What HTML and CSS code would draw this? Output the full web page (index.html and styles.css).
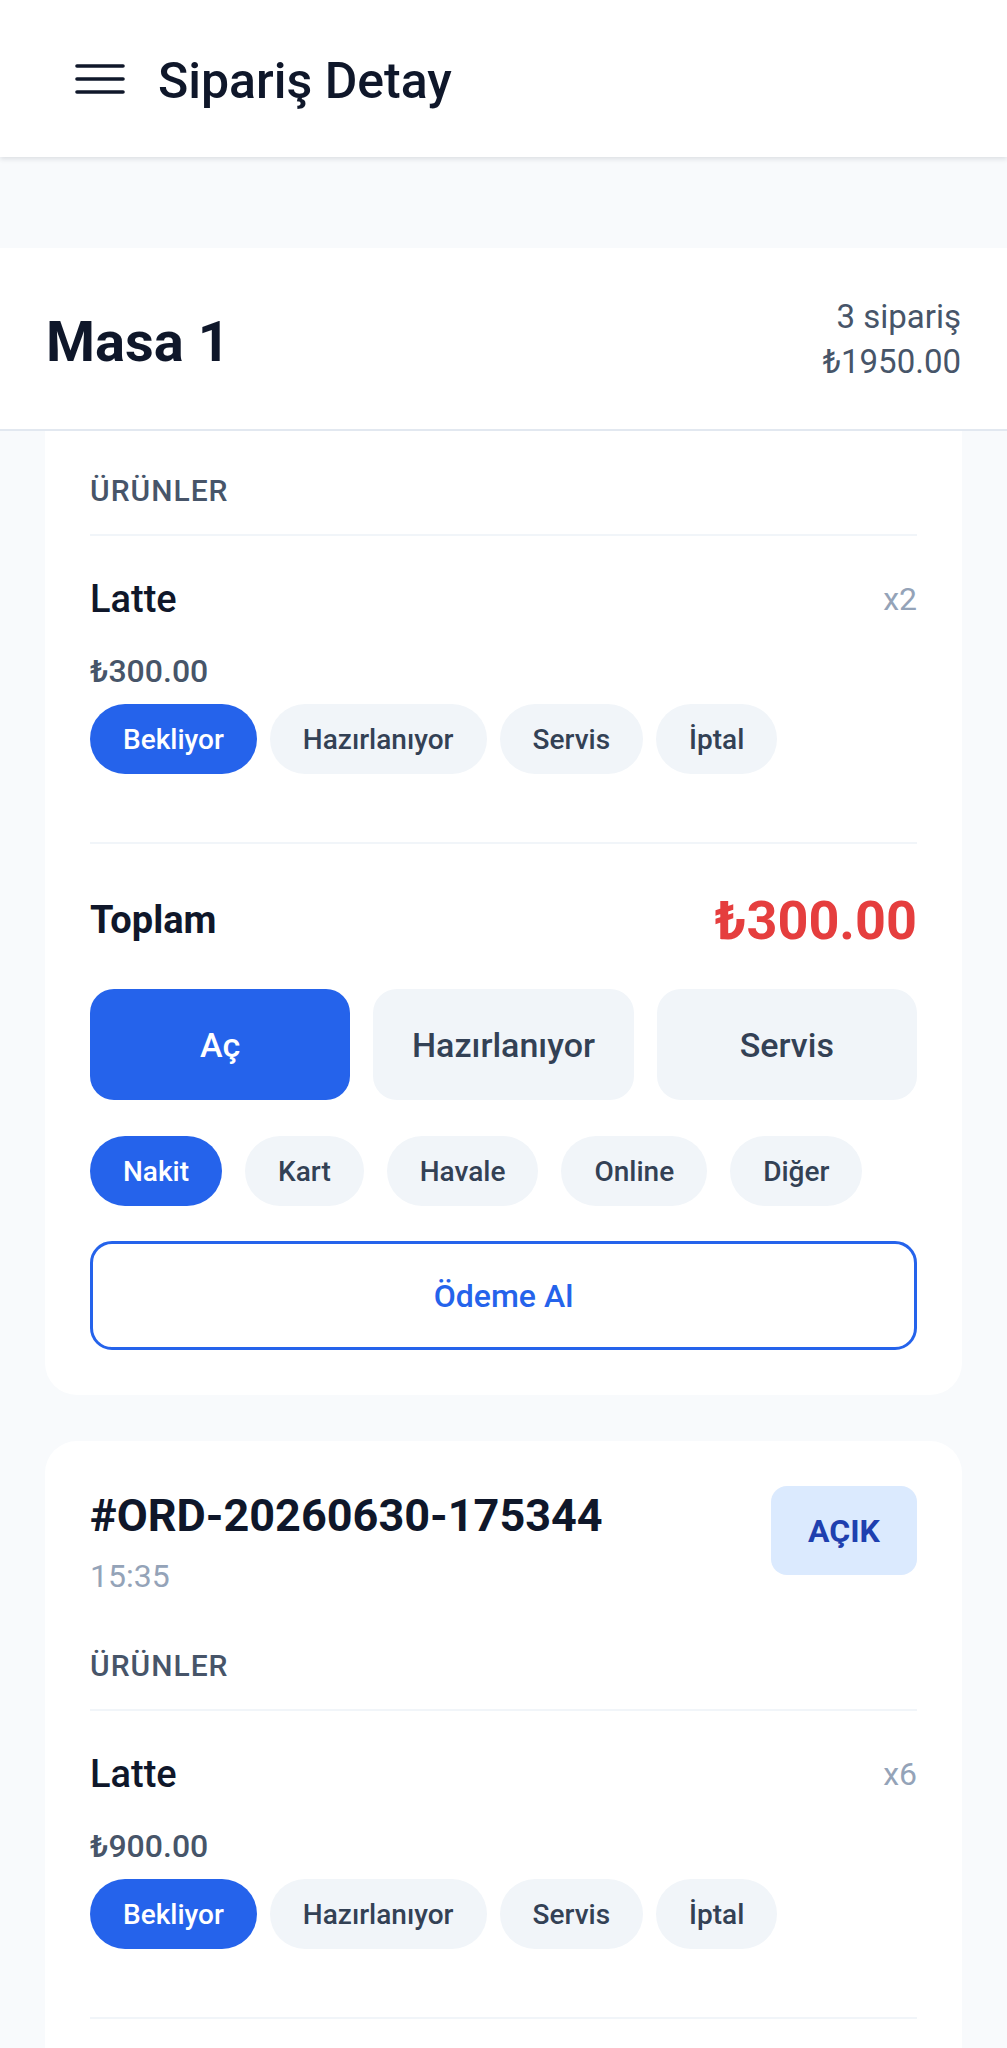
FILE: index.html
```html
<!DOCTYPE html>
<html lang="tr">
<head>
    <meta charset="UTF-8">
    <meta name="viewport" content="width=device-width, initial-scale=1.0">
    <title>Sipariş Detay</title>
    <link rel="stylesheet" href="styles.css">
</head>
<body>
    <header class="topbar">
        <button class="menu-btn" aria-label="Menü">
            <svg width="50" height="30" viewBox="0 0 50 30">
                <path d="M2 2H48M2 15H48M2 28H48" stroke="#0f172a" stroke-width="3.6" stroke-linecap="round" fill="none"/>
            </svg>
        </button>
        <h1 class="topbar-title">Sipariş Detay</h1>
    </header>

    <main class="page">
        <section class="table-bar">
            <h2 class="table-name">Masa 1</h2>
            <div class="table-summary">
                <span>3 sipariş</span>
                <span>₺1950.00</span>
            </div>
        </section>

        <div class="orders">
            <!-- first card is scrolled up under the table bar -->
            <article class="order-card is-scrolled">
                <h3 class="section-label">ÜRÜNLER</h3>
                <div class="item">
                    <div class="item-head">
                        <span class="item-name">Latte</span>
                        <span class="item-qty">x2</span>
                    </div>
                    <div class="item-price">₺300.00</div>
                    <div class="chips">
                        <button class="chip active">Bekliyor</button>
                        <button class="chip">Hazırlanıyor</button>
                        <button class="chip">Servis</button>
                        <button class="chip">İptal</button>
                    </div>
                </div>
                <div class="total-row">
                    <span class="total-label">Toplam</span>
                    <span class="total-value">₺300.00</span>
                </div>
                <div class="status-row">
                    <button class="status-btn active">Aç</button>
                    <button class="status-btn">Hazırlanıyor</button>
                    <button class="status-btn">Servis</button>
                </div>
                <div class="chips pay-chips">
                    <button class="chip active">Nakit</button>
                    <button class="chip">Kart</button>
                    <button class="chip">Havale</button>
                    <button class="chip">Online</button>
                    <button class="chip">Diğer</button>
                </div>
                <button class="pay-btn">Ödeme Al</button>
            </article>

            <!-- rest of this card is below the fold -->
            <article class="order-card is-open">
                <div class="order-head">
                    <div>
                        <h3 class="order-no">#ORD-20260630-175344</h3>
                        <div class="order-time">15:35</div>
                    </div>
                    <span class="badge">AÇIK</span>
                </div>
                <h3 class="section-label">ÜRÜNLER</h3>
                <div class="item">
                    <div class="item-head">
                        <span class="item-name">Latte</span>
                        <span class="item-qty">x6</span>
                    </div>
                    <div class="item-price">₺900.00</div>
                    <div class="chips">
                        <button class="chip active">Bekliyor</button>
                        <button class="chip">Hazırlanıyor</button>
                        <button class="chip">Servis</button>
                        <button class="chip">İptal</button>
                    </div>
                </div>
            </article>
        </div>
    </main>
</body>
</html>
```

FILE: styles.css
```css
/* Base */
body {
    margin: 0;
    background-color: #f8fafc;
    color: #0f172a;
    font-family: Roboto, 'Noto Sans', sans-serif;
}

h1, h2, h3 {
    margin: 0;
}

button {
    font-family: inherit;
    border: none;
    cursor: pointer;
}

/* Top bar */
.topbar {
    display: flex;
    align-items: center;
    height: 157px;
    padding-left: 75px;
    background: #fff;
    box-shadow: 0 2px 5px rgba(15, 23, 42, 0.12);
    position: relative;
    z-index: 2;
}

.menu-btn {
    display: flex;
    padding: 0;
    background: none;
    margin-right: 33px;
}

.topbar-title {
    font-size: 50px;
    font-weight: 500;
    color: #0f172a;
    margin-top: 4px;
}

/* Table summary */
.page {
    padding-top: 91px;
}

.table-bar {
    display: flex;
    justify-content: space-between;
    align-items: center;
    box-sizing: border-box;
    height: 183px;
    padding: 0 46px;
    background: #fff;
    border-bottom: 2px solid #e2e8f0;
}

.table-name {
    font-size: 56px;
    font-weight: 700;
    margin-top: 6px;
}

.table-summary {
    display: flex;
    flex-direction: column;
    align-items: flex-end;
    font-size: 33px;
    line-height: 45px;
    color: #475569;
}

/* Order cards */
.orders {
    padding: 0 45px;
}

.order-card {
    background: #fff;
    border-radius: 32px;
    padding: 45px;
    margin-bottom: 46px;
}

.order-card.is-scrolled {
    border-radius: 0 0 32px 32px;
    padding-top: 42px;
}

.order-card.is-open {
    padding-bottom: 140px;
}

.order-head {
    display: flex;
    justify-content: space-between;
    align-items: flex-start;
    margin-bottom: 52px;
}

.order-no {
    font-size: 45px;
    font-weight: 700;
    line-height: 56px;
    margin-top: 2px;
}

.order-time {
    margin-top: 12px;
    font-size: 32px;
    line-height: 40px;
    color: #94a3b8;
}

.badge {
    display: flex;
    align-items: center;
    justify-content: center;
    width: 146px;
    height: 89px;
    border-radius: 16px;
    background: #dbeafe;
    color: #1e40af;
    font-size: 32px;
    font-weight: 700;
}

.section-label {
    font-size: 30px;
    line-height: 36px;
    font-weight: 500;
    letter-spacing: 1px;
    color: #475569;
    padding-bottom: 25px;
    border-bottom: 2px solid #f1f5f9;
}

.item {
    padding-top: 40px;
    padding-bottom: 68px;
    border-bottom: 2px solid #f1f5f9;
}

.item-head {
    display: flex;
    justify-content: space-between;
    align-items: center;
}

.item-name {
    font-size: 38px;
    line-height: 46px;
    font-weight: 500;
}

.item-qty {
    font-size: 32px;
    color: #94a3b8;
}

.item-price {
    margin-top: 29px;
    font-size: 32px;
    line-height: 40px;
    font-weight: 500;
    color: #475569;
}

.chips {
    display: flex;
    gap: 13px;
    margin-top: 13px;
}

.chip {
    height: 70px;
    padding: 0 33px;
    border-radius: 35px;
    background: #f1f5f9;
    color: #334155;
    font-size: 28px;
    font-weight: 500;
}

.chip.active {
    background: #2563eb;
    color: #fff;
}

/* Totals and actions */
.total-row {
    display: flex;
    justify-content: space-between;
    align-items: center;
    height: 64px;
    margin-top: 44px;
}

.total-label {
    font-size: 38px;
    font-weight: 700;
}

.total-value {
    font-size: 54px;
    font-weight: 700;
    color: #e53e3e;
}

.status-row {
    display: flex;
    gap: 23px;
    margin-top: 37px;
}

.status-btn {
    flex: 1;
    height: 111px;
    border-radius: 24px;
    background: #f1f5f9;
    color: #334155;
    font-size: 34px;
    font-weight: 500;
}

.status-btn.active {
    background: #2563eb;
    color: #fff;
}

.pay-chips {
    gap: 23px;
    margin-top: 36px;
}

.pay-btn {
    display: block;
    width: 100%;
    height: 109px;
    margin-top: 35px;
    border: 3px solid #2563eb;
    border-radius: 22px;
    background: #fff;
    color: #2563eb;
    font-size: 32px;
    font-weight: 500;
}
```
